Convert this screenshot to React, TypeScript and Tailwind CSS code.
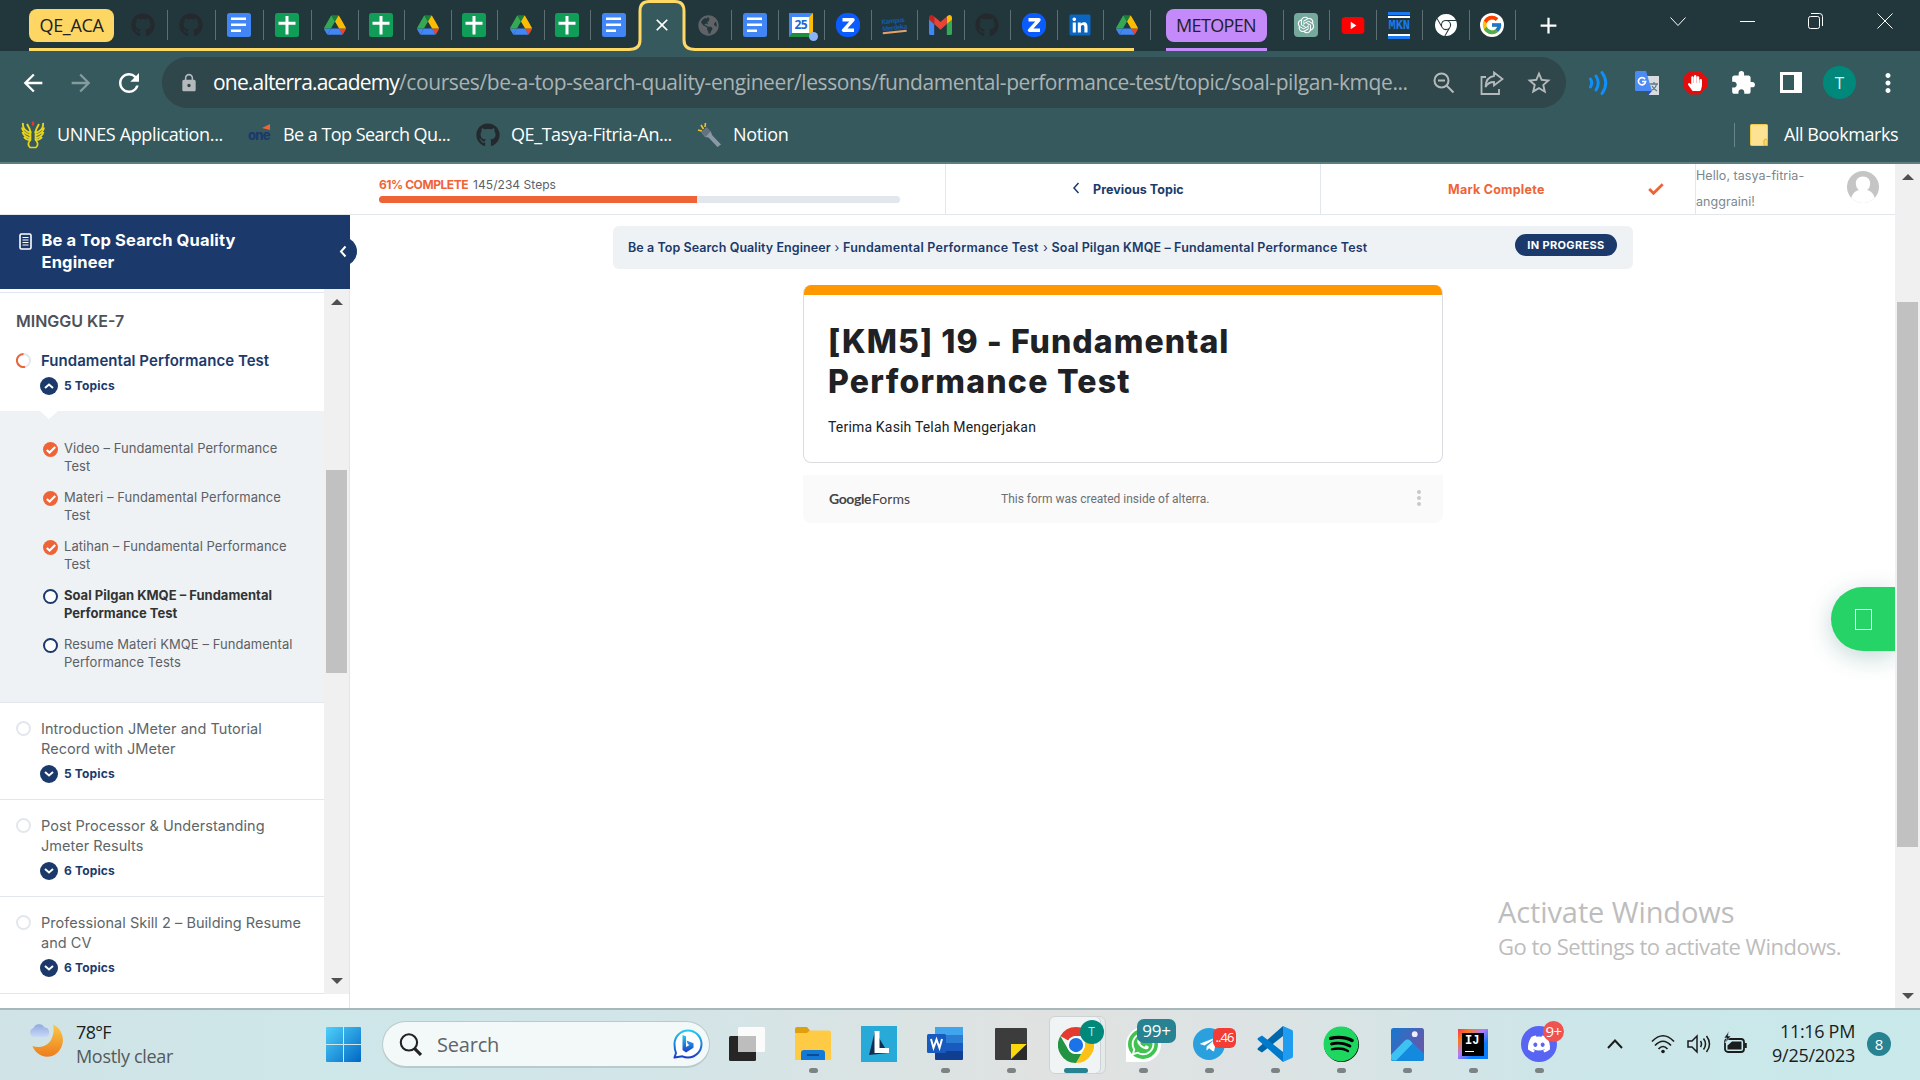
import React from 'react';
import type { ReactNode } from 'react';
import { FaGithub, FaSpotify, FaWhatsapp, FaTelegramPlane, FaDiscord, FaLinkedin, FaGlobeAmericas, FaHandPaper } from 'react-icons/fa';
import { FcGoogle } from 'react-icons/fc';
import { SiGooglechrome } from 'react-icons/si';
import { RiOpenaiFill } from 'react-icons/ri';
import { MdArrowBack, MdArrowForward, MdRefresh, MdLock, MdStarBorder, MdExtension, MdMoreVert, MdAdd, MdClose } from 'react-icons/md';

/* ---------- favicons ---------- */

const DocsIcon = () => (
  <svg viewBox="0 0 24 24" className="size-6">
    <rect width="24" height="24" rx="2.5" fill="#4285f4" />
    <path d="M4 5.8h15M4 11.8h15M4 17.8h10" stroke="#fff" strokeWidth="2.6" />
  </svg>
);

const SheetsIcon = () => (
  <svg viewBox="0 0 24 24" className="size-6">
    <rect width="24" height="24" rx="2.5" fill="#0f9d58" />
    <path d="M3.5 10.2h17M12 3v18.5" stroke="#fff" strokeWidth="3" />
  </svg>
);

const DriveIcon = () => (
  <svg viewBox="0 0 87.3 78" className="h-5 w-[22px]">
    <path d="m6.6 66.85 3.85 6.65c.8 1.4 1.95 2.5 3.3 3.3l13.75-23.8h-27.5c0 1.55.4 3.1 1.2 4.5z" fill="#4285f4" />
    <path d="m43.65 25-13.75-23.8c-1.35.8-2.5 1.9-3.3 3.3l-25.4 44a9.06 9.06 0 0 0-1.2 4.5h27.5z" fill="#34a853" />
    <path d="m73.55 76.8c1.35-.8 2.5-1.9 3.3-3.3l1.6-2.75 7.65-13.25c.8-1.4 1.2-2.95 1.2-4.5h-27.502l5.852 11.5z" fill="#ea4335" />
    <path d="m43.65 25 13.75-23.8c-1.35-.8-2.9-1.2-4.5-1.2h-18.5c-1.6 0-3.15.45-4.5 1.2z" fill="#188038" />
    <path d="m59.8 53h-32.3l-13.75 23.8c1.35.8 2.9 1.2 4.5 1.2h50.8c1.6 0 3.15-.45 4.5-1.2z" fill="#4285f4" />
    <path d="m73.4 26.5-12.7-22c-.8-1.4-1.95-2.5-3.3-3.3l-13.75 23.8 16.15 28h27.45c0-1.55-.4-3.1-1.2-4.5z" fill="#fbbc04" />
  </svg>
);

const CalendarIcon = () => (
  <div className="relative size-6">
    <div className="flex size-6 items-center justify-center overflow-hidden border-y-4 border-r-[4px] border-l-[3px] border-t-[#4285f4] border-r-[#fbbc04] border-b-[#1e8e3e] border-l-[#4285f4] bg-white font-['Open_Sans',sans-serif] text-[12px] leading-none font-bold tracking-[-0.5px] text-[#1a67d2]">
      25
    </div>
    <span className="absolute -right-[5px] -bottom-1 size-[9px] rounded-full bg-[#8ab4f8]" />
  </div>
);

const ZoomIcon = () => (
  <svg viewBox="0 0 24 24" className="size-6">
    <rect width="24" height="24" rx="11" fill="#0b5cff" />
    <path d="M6.500 6.800H17L7.500 17.300H18" fill="none" stroke="#fff" strokeWidth="3.4" strokeLinejoin="round" />
  </svg>
);

const KampusIcon = () => (
  <div className="w-6 -rotate-6 border-b-2 border-[#e9a36a] font-['Open_Sans',sans-serif] text-[6.500px] leading-[7px] font-bold tracking-[-0.6px] text-[#1459a8]">
    Kampus Merdeka
  </div>
);

const GmailIcon = () => (
  <svg viewBox="0 0 24 18" className="h-[20px] w-[23px]" preserveAspectRatio="none">
    <path d="M0 3v13.400C0 17.300.7 18 1.600 18h3.800V8z" fill="#4285f4" />
    <path d="M24 3v13.400c0 .9-.7 1.600-1.600 1.600h-3.800V8z" fill="#34a853" />
    <path d="M18.600 1.400V8.200L24 4.100V2.500c0-2-2.300-3.200-4-2z" fill="#fbbc04" />
    <path d="M5.400 8.200V1.400L12 6.400l6.600-5v6.800L12 13.200z" fill="#ea4335" />
    <path d="M0 2.500v1.600l5.400 4.100V1.400L4 .5C2.300-.7 0 .5 0 2.500z" fill="#c5221f" />
  </svg>
);

const YoutubeIcon = () => (
  <svg viewBox="0 0 24 18" className="h-[17px] w-6">
    <rect width="24" height="18" rx="4" fill="#f00" />
    <path d="M9.600 5v8l6-4z" fill="#fff" />
  </svg>
);

const MknIcon = () => (
  <div className="flex h-[27px] w-[22px] flex-col items-center justify-between border-y-[3px] border-[#1a7af0]">
    <div className="mt-px w-full border-y-2 border-white py-[2px] text-center font-['Liberation_Mono',monospace] text-[12px] leading-[12px] font-bold text-[#1a7af0]">MKN</div>
  </div>
);

const Github = () => <FaGithub className="size-6 text-[#24292e]" />;

function Tab({ children, wide }: { children: ReactNode; wide?: boolean }) {
  return (
    <div className={`flex h-[30px] shrink-0 items-center justify-center border-r border-[#5d6f72] ${wide ? 'w-12 pr-px' : 'w-[46.5px]'}`}>
      {children}
    </div>
  );
}

function TabStrip() {
  return (
    <div className="relative flex h-[51px] items-center bg-[#22373b] pb-px pl-[29px]">
      <svg className="absolute top-0 left-0 h-[51px] w-[1140px]" viewBox="0 0 1140 51">
        <path d="M630 51C637 50 640 46 640 40V11Q640 1.500 649 1.500H675Q684 1.500 684 11V40C684 46 687 50 694 51z" fill="#36595d" />
        <path d="M29 49.500H629C637 49.500 640 46 640 40V11Q640 1.500 649 1.500H675Q684 1.500 684 11V40C684 46 687 49.500 695 49.500H1134" fill="none" stroke="#ffd966" strokeWidth="3" />
      </svg>
      <div className="mr-[6px] flex h-[33px] w-[85px] shrink-0 items-center justify-center rounded-lg bg-[#fdd663] text-[18px] tracking-[-0.35px] text-[#202124]">QE_ACA</div>
      <Tab wide><Github /></Tab>
      <Tab wide><Github /></Tab>
      <Tab wide><DocsIcon /></Tab>
      <Tab wide><SheetsIcon /></Tab>
      <Tab><DriveIcon /></Tab>
      <Tab><SheetsIcon /></Tab>
      <Tab><DriveIcon /></Tab>
      <Tab><SheetsIcon /></Tab>
      <Tab><DriveIcon /></Tab>
      <Tab><SheetsIcon /></Tab>
      <div className="flex w-[46.500px] shrink-0 items-center justify-center"><DocsIcon /></div>
      <div className="relative flex w-[48px] shrink-0 items-center justify-center text-white"><MdClose className="size-5" /></div>
      <Tab><FaGlobeAmericas className="size-[21px] text-[#5f6368]" /></Tab>
      <Tab><DocsIcon /></Tab>
      <Tab><CalendarIcon /></Tab>
      <Tab><ZoomIcon /></Tab>
      <Tab><KampusIcon /></Tab>
      <Tab><GmailIcon /></Tab>
      <Tab><Github /></Tab>
      <Tab><ZoomIcon /></Tab>
      <Tab><div className="flex size-[19px] items-center justify-center bg-white"><FaLinkedin className="size-6 shrink-0 text-[#0a66c2]" /></div></Tab>
      <Tab><DriveIcon /></Tab>
      <div className="relative mr-[16px] ml-[15px] flex h-[33px] w-[101px] shrink-0 items-center justify-center rounded-lg bg-[#c58af9] text-[18px] tracking-[-0.65px] text-[#202124]">
        METOPEN
        <span className="absolute top-[39px] left-0 h-[3px] w-full bg-[#c58af9]" />
      </div>
      <span className="h-[30px] w-px bg-[#5d6f72]" />
      <Tab><div className="flex size-6 items-center justify-center rounded-[4px] bg-[#75a99c]"><RiOpenaiFill className="size-5 text-white" /></div></Tab>
      <Tab><YoutubeIcon /></Tab>
      <Tab><MknIcon /></Tab>
      <Tab><SiGooglechrome className="size-[22px] text-white" /></Tab>
      <Tab><div className="flex size-6 items-center justify-center rounded-full bg-white"><FcGoogle className="size-[22px]" /></div></Tab>
      <MdAdd className="ml-[19px] size-[27px] shrink-0 text-white" />
      <div className="mb-[8px] ml-[108px] flex items-center text-white">
        <svg className="mr-[54px] h-[9px] w-4" viewBox="0 0 16 9"><path d="M.5.500 8 8.500 15.500.500" fill="none" stroke="currentColor" /></svg>
        <span className="mr-[53px] h-px w-[15px] bg-white" />
        <svg className="mr-[54px] h-4 w-[15px]" viewBox="0 0 15 16"><rect x=".5" y="3.500" width="11" height="12" rx="2" fill="none" stroke="currentColor" /><path d="M3 .500h8.500a3 3 0 0 1 3 3V13" fill="none" stroke="currentColor" /></svg>
        <svg className="h-4 w-4" viewBox="0 0 16 16"><path d="m.5.500 15 15m0-15-15 15" stroke="currentColor" /></svg>
      </div>
    </div>
  );
}

function TranslateIcon() {
  return (
    <svg viewBox="0 0 24 24" className="size-6">
      <path d="M10 5h14v19H14z" fill="#d9dcdf" />
      <path d="M15 13h8M19 11v2m2.500 0c-.5 3-3 5.500-5.500 6.500m1-4.500c1 2 3 4 5 5" stroke="#607988" strokeWidth="1.300" fill="none" />
      <path d="M0 1.500Q0 0 1.500 0H11l6 20H1.500Q0 20 0 18.500z" fill="#4c8bf5" />
      <path d="M12 20h5l-3.500 4z" fill="#2a4fc0" />
      <path d="M10 8.200A3.600 3.600 0 1 0 10.600 10.500H7" fill="none" stroke="#fff" strokeWidth="1.700" />
    </svg>
  );
}

function Toolbar() {
  return (
    <div className="flex h-[63px] items-center bg-[#36595d] pl-[19px] text-white">
      <MdArrowBack className="size-[28px]" />
      <MdArrowForward className="ml-[20px] size-[28px] text-[#869b9e]" />
      <MdRefresh className="ml-[19px] size-[30px]" />
      <div className="ml-[18px] flex h-[51px] w-[1404px] shrink-0 items-center rounded-full bg-[#2f464a] text-[#b4babc]">
        <MdLock className="ml-[17px] size-5" />
        <div className="ml-[14px] w-[1220px] whitespace-nowrap text-[21px] tracking-[-0.41px] text-[#a9b3b5]">
          <span className="tracking-[-0.81px] text-white">one.alterra.academy</span>
          /courses/be-a-top-search-quality-engineer/lessons/fundamental-performance-test/topic/soal-pilgan-kmqe...
        </div>
        <svg viewBox="0 0 22 22" className="size-[22px] shrink-0" fill="none" stroke="currentColor" strokeWidth="2"><circle cx="8.500" cy="8.500" r="7" /><path d="m13.500 13.500 7 7M5 8.500h7" /></svg>
        <svg viewBox="0 0 24 24" className="ml-[25px] size-6 shrink-0" fill="none" stroke="currentColor" strokeWidth="1.800"><path d="M6 6H1.500V23H19V18M14 1.500 22.500 8 14 14.500V11Q8 11 5.500 16 6 6 14 5z" /></svg>
        <MdStarBorder className="ml-[21px] size-[28px] shrink-0" />
      </div>
      <svg viewBox="0 0 20 26" className="ml-[22px] h-[26px] w-[21px] shrink-0" fill="none" stroke="#0f8ffa" strokeWidth="3" strokeLinecap="round"><path d="M2 9Q4.500 13 2 17M7.500 6Q12 13 7.500 20M13.500 2.500Q21 13 13.500 23.500" /></svg>
      <div className="ml-[26px]"><TranslateIcon /></div>
      <div className="ml-6 flex size-6 items-center justify-center bg-[#e40d0d] [clip-path:polygon(30%_0,70%_0,100%_30%,100%_70%,70%_100%,30%_100%,0_70%,0_30%)]"><FaHandPaper className="size-[16px]" /></div>
      <MdExtension className="ml-[23px] size-[26px]" />
      <div className="ml-[24px] h-[21px] w-[22px] border-[3px] border-r-[8px] border-white" />
      <div className="ml-[21px] flex size-[33px] items-center justify-center rounded-full bg-[#00897b] text-[17px] text-[#e6f3f2]">T</div>
      <MdMoreVert className="ml-[17px] size-[30px]" />
    </div>
  );
}

function BookmarksBar() {
  return (
    <div className="flex h-[48px] items-center bg-[#36595d] pb-[7px] text-[18px] text-white">
      <svg viewBox="0 0 24 28" className="ml-[21px] h-7 w-6 shrink-0" fill="none" stroke="#e8d41a">
        <path d="M2 2Q1 9 9.500 12M1 6.500Q1.500 12 9.500 14.500M1.500 11Q3 16 9.500 17M3 16Q5 19 9.500 19M22 2Q23 9 14.500 12M23 6.500Q22.500 12 14.500 14.500M22.500 11Q21 16 14.500 17M21 16Q19 19 14.500 19M6 3Q8.500 7 10 12M18 3Q15.500 7 14 12" strokeWidth="1.900" />
        <path d="M9.500 12v7Q5.500 23 9 26.500H15Q18.500 23 14.500 19V12" strokeWidth="1.700" />
        <path d="M12 .500v4" stroke="#e33" strokeWidth="2.200" />
      </svg>
      <span className="ml-3 w-[191px] whitespace-nowrap tracking-[-0.35px]">UNNES Application...</span>
      <div className="relative w-[24px] font-['Inter',sans-serif] text-[13px] leading-4 font-extrabold tracking-[-0.800px] text-[#1b3a6b]">
        one
        <svg viewBox="0 0 8 6" className="absolute top-[-3px] left-[14px] h-[6px] w-2"><path d="M0 4 8 0v6z" fill="#ef6437" /></svg>
      </div>
      <span className="ml-[11px] w-[193px] whitespace-nowrap tracking-[-0.54px]">Be a Top Search Qu...</span>
      <FaGithub className="size-6 shrink-0 text-[#24292e]" />
      <span className="ml-[11px] w-[186px] whitespace-nowrap tracking-[-0.42px]">QE_Tasya-Fitria-An...</span>
      <svg viewBox="0 0 24 24" className="size-6 shrink-0">
        <path d="M1 7 5 8M4 2l2.500 4M8.500 0 8 4" stroke="#f2c230" strokeWidth="1.600" />
        <path d="m4.500 9.500 5-5 4.500 4.500 1 3 9 9.500-3.500 2.500-9-9.500L8 14z" fill="#8b98a6" />
        <path d="m4.500 9.500 5-5 4 4-5 5.500z" fill="#66727f" />
      </svg>
      <span className="ml-3 tracking-[-0.3px]">Notion</span>
      <span className="ml-auto h-6 w-px bg-[#6b8487]" />
      <svg viewBox="0 0 18 22" className="ml-[15px] h-[22px] w-[18px]"><rect x=".5" y=".5" width="17" height="21" rx="1" fill="#fde293" stroke="#f0cb4c" /><path d="M14 21.500V16q2-2 3.500 0v5.500z" fill="#fdd663" stroke="#e0b53a" /></svg>
      <span className="mr-[22px] ml-[16px] tracking-[-0.46px]">All Bookmarks</span>
    </div>
  );
}

/* ---------- course page ---------- */

function CourseHeader() {
  return (
    <div className="flex h-[51px] shrink-0 border-b border-[#e2e7ed] bg-white">
      <div className="w-[946px] border-r border-[#e2e7ed] pt-[11px] pl-[379px]">
        <div className="h-[21px] text-[12px] leading-[20px]">
          <span className="font-bold tracking-[-0.45px] text-[#ef6437]">61% COMPLETE</span>
          <span className="ml-[5px] tracking-[0.05px] text-[#5c5f66]">145/234 Steps</span>
        </div>
        <div className="h-[7px] w-[521px] overflow-hidden rounded-full bg-[#e2e7ee]">
          <div className="h-full w-[318px] bg-[#ef6437]" />
        </div>
      </div>
      <div className="flex w-[375px] items-center border-r border-[#e2e7ed] pl-[126px] text-[12.500px] font-bold tracking-[0.05px] text-[#1b3a6b]">
        <svg viewBox="0 0 8 12" className="mr-[13px] mb-0.5 h-3 w-2" fill="none" stroke="currentColor" strokeWidth="1.500"><path d="M6.500 1 2 6l4.500 5" /></svg>
        <span className="pt-[3px]">Previous Topic</span>
      </div>
      <div className="flex w-[375px] items-center border-r border-[#e2e7ed] text-[12.500px] font-bold text-[#ef6437]">
        <span className="w-[327px] pt-[3px] pl-[127px] tracking-[0.25px]">Mark Complete</span>
        <svg viewBox="0 0 16 12" className="h-3 w-4" fill="none" stroke="currentColor" strokeWidth="2.800"><path d="m1.200 6 4.300 4.300L14.700 1.200" /></svg>
      </div>
      <div className="-mt-[1px] w-[151px] text-[12.500px] leading-[26px] tracking-[0.05px] text-[#7b8790]">
        Hello, tasya-fitria-
        <br />
        anggraini!
      </div>
      <svg viewBox="0 0 32 32" className="mt-[7px] size-8">
        <clipPath id="avatar"><circle cx="16" cy="16" r="16" /></clipPath>
        <g clipPath="url(#avatar)"><rect width="32" height="32" fill="#c5c5c5" /><path d="M16 5.500c4.500 0 7.200 3 7.200 7 0 3-1.500 5.300-3.200 6.500 5 1.300 8 5 8.700 13H3.300C4 24 7 20.300 12 19c-1.700-1.200-3.200-3.500-3.200-6.500 0-4 2.700-7 7.200-7z" fill="#fff" /></g>
      </svg>
    </div>
  );
}

function TopicsToggle({ count, open }: { count: number; open?: boolean }) {
  return (
    <div className="flex h-[18px] items-center text-[12px] font-bold tracking-[0.15px] text-[#1b3a6b]">
      <span className="mr-[6px] flex size-[18px] items-center justify-center rounded-full bg-[#1b3a6b]">
        <svg viewBox="0 0 10 6" className={open ? 'h-[6px] w-[10px]' : 'h-[6px] w-[10px] rotate-180'} fill="none" stroke="#fff" strokeWidth="2"><path d="M1 5 5 1.500 9 5" /></svg>
      </span>
      {count} Topics
    </div>
  );
}

const topics: { lines: [string, string]; state: 'done' | 'current' | 'todo' }[] = [
  { lines: ['Video – Fundamental Performance', 'Test'], state: 'done' },
  { lines: ['Materi – Fundamental Performance', 'Test'], state: 'done' },
  { lines: ['Latihan – Fundamental Performance', 'Test'], state: 'done' },
  { lines: ['Soal Pilgan KMQE – Fundamental', 'Performance Test'], state: 'current' },
  { lines: ['Resume Materi KMQE – Fundamental', 'Performance Tests'], state: 'todo' },
];

const lessons: { lines: [string, string]; count: number }[] = [
  { lines: ['Introduction JMeter and Tutorial', 'Record with JMeter'], count: 5 },
  { lines: ['Post Processor & Understanding', 'Jmeter Results'], count: 6 },
  { lines: ['Professional Skill 2 – Building Resume', 'and CV'], count: 6 },
];

function Arrow({ down }: { down?: boolean }) {
  return (
    <svg viewBox="0 0 12 6" className={down ? 'h-[6px] w-[12px] rotate-180' : 'h-[6px] w-[12px]'}><path d="M6 0l6 6H0z" fill="#505050" /></svg>
  );
}

function Sidebar() {
  return (
    <aside className="flex w-[350px] shrink-0 flex-col border-r border-[#e2e5e9]">
      <div className="relative -mr-px flex h-[74px] shrink-0 bg-[#1b3a6b] pt-[14px] pl-[19px] text-white">
        <svg viewBox="0 0 13 17" className="mt-[4px] mr-[9.500px] h-[17px] w-[13px]" fill="none" stroke="#fff"><rect x="1" y="1" width="11" height="15" rx="1.500" strokeWidth="1.600" /><path d="M3.500 4.500h6M3.500 7h6M3.500 9.500h6M3.500 12h6" /></svg>
        <p className="text-[16.500px] leading-[22px] font-bold tracking-[0.14px]">Be a Top Search Quality<br />Engineer</p>
        <span className="absolute top-[22px] left-[328px] flex size-[29px] items-center justify-center rounded-full bg-[#1b3a6b]">
          <svg viewBox="0 0 8 12" className="h-[13px] w-2" fill="none" stroke="#fff" strokeWidth="2"><path d="M6.500 1 2 6l4.500 5" /></svg>
        </span>
      </div>
      <div className="flex h-[705px]">
        <div className="w-[324px]">
          <div className="mt-[3px] h-[119px] border-t border-[#e0e5ef] pl-4">
            <h2 className="mt-[16px] text-[16px] leading-6 font-semibold text-[#4d5259]">MINGGU KE-7</h2>
            <div className="mt-[17px] flex h-[20px] items-center">
              <svg viewBox="0 0 15 15" className="mr-[10px] size-[15px]" fill="none" strokeWidth="2"><circle cx="7.500" cy="7.500" r="6.500" stroke="#e2e7ed" /><path d="M7.500 1a6.500 6.500 0 1 0 1.500 12.800" stroke="#ef6437" /></svg>
              <span className="pt-[2px] text-[15px] font-semibold tracking-[0.04px] text-[#1b3a6b]">Fundamental Performance Test</span>
            </div>
            <div className="mt-[7px] ml-6"><TopicsToggle count={5} open /></div>
          </div>
          <div className="h-[292px] border-b border-[#e2e7ed] bg-[#eef2f5]">
            <svg viewBox="0 0 18 8" className="ml-10 h-2 w-[18px]"><path d="M0 0h18L9 8z" fill="#fff" /></svg>
            <ul className="mt-[20px] flex flex-col gap-[13px] pl-[43px]">
              {topics.map((t) => (
                <li key={t.lines[0]} className="flex text-[13px] leading-[18px]">
                  {t.state === 'done' ? (
                    <span className="mt-[3px] mr-[6px] flex size-[15px] items-center justify-center rounded-full bg-[#ef6437]">
                      <svg viewBox="0 0 10 8" className="h-2 w-[10px]" fill="none" stroke="#fff" strokeWidth="2.200"><path d="M.8 4 3.600 6.500 9.200 1" /></svg>
                    </span>
                  ) : (
                    <span className="mt-[3px] mr-[6px] size-[15px] rounded-full border-2 border-[#1b3a6b] bg-white" />
                  )}
                  <span className={t.state === 'current' ? 'font-bold text-[#333]' : 'tracking-[0.05px] text-[#5d6064]'}>
                    {t.lines[0]}<br />{t.lines[1]}
                  </span>
                </li>
              ))}
            </ul>
          </div>
          {lessons.map((l) => (
            <div key={l.lines[0]} className="h-[97px] border-b border-[#e2e7ed] pt-4 pl-4">
              <div className="flex text-[14.500px] leading-5 text-[#5d6669]">
                <span className="mt-[2px] mr-[10px] size-[15px] rounded-full border-2 border-[#e2e7ed]" />
                <span className="tracking-[0.04px]">{l.lines[0]}<br />{l.lines[1]}</span>
              </div>
              <div className="mt-[6px] ml-6"><TopicsToggle count={l.count} /></div>
            </div>
          ))}
        </div>
        <div className="flex w-[25px] flex-col items-center bg-[#f0f0f0] pt-[10px] pb-[10px]">
          <Arrow />
          <div className="mt-[165px] h-[203px] w-[21px] bg-[#c1c1c1]" />
          <div className="mt-auto flex"><Arrow down /></div>
        </div>
      </div>
    </aside>
  );
}

function FormCard() {
  return (
    <div className="mt-4 ml-[453px] w-[640px]">
      <div className="h-[178px] overflow-hidden rounded-lg border border-t-0 border-[#dadce0] bg-white">
        <div className="-mx-px h-[10px] bg-[#ff9800]" />
        <h1 className="mt-[27px] pl-6 text-[32px] leading-[40px] font-extrabold text-[#202124]">
          <span className="tracking-[1.05px]">[KM5] 19 - Fundamental</span>
          <br />
          <span className="tracking-[1.25px]">Performance Test</span>
        </h1>
        <p className="mt-[15px] pl-6 font-['Roboto',sans-serif] text-[14px] leading-5 tracking-[0.18px] text-[#202124]">Terima Kasih Telah Mengerjakan</p>
      </div>
      <div className="mt-3 flex h-12 items-center rounded-b-lg bg-[#fafafa] pb-[2px] pl-[26px] font-['Roboto',sans-serif] text-[12px] text-[#6c6f73]">
        <span className="w-[172px] font-['Lato',sans-serif] text-[14px] text-[#444]"><b className="font-bold tracking-[-0.4px]">Google</b><span className="ml-px">Forms</span></span>
        <span className="pt-px">This form was created inside of alterra.</span>
        <div className="mr-[22px] ml-auto flex flex-col gap-[2px]">
          <span className="size-1 rounded-full bg-[#c8c8c8]" /><span className="size-1 rounded-full bg-[#c8c8c8]" /><span className="size-1 rounded-full bg-[#c8c8c8]" />
        </div>
      </div>
    </div>
  );
}

function Main() {
  return (
    <main className="flex flex-1 flex-col">
      <div className="mt-[11px] ml-[263px] flex h-[43px] w-[1020px] justify-between rounded-md bg-[#eef2f5] pr-4 pl-[15px]">
        <nav className="flex items-center pt-[2px] text-[12.500px] font-semibold text-[#1b3a6b]">
          <span className="w-[206.500px] tracking-[0.07px]">Be a Top Search Quality Engineer</span>
          <span className="w-[8.500px] font-normal">›</span>
          <span className="w-[200px] tracking-[0.23px]">Fundamental Performance Test</span>
          <span className="w-[8.500px] font-normal">›</span>
          <span className="tracking-[0.14px]">Soal Pilgan KMQE – Fundamental Performance Test</span>
        </nav>
        <span className="mt-2 flex h-[22px] w-[102px] items-center justify-center rounded-full bg-[#1b3a6b] text-[11px] font-bold tracking-[0.35px] text-white">IN PROGRESS</span>
      </div>
      <FormCard />
      <div className="mt-16 flex h-16 w-16 items-center self-end rounded-l-full bg-[#25d366] pl-6 shadow-[0_6px_24px_rgba(7,94,84,0.240)]">
        <span className="h-[21px] w-[17px] border border-white" />
      </div>
      <div className="mt-[243px] ml-[1148px] font-['Open_Sans',sans-serif] text-[#bdbdbd]">
        <p className="text-[29px] leading-9 tracking-[-0.1px]">Activate Windows</p>
        <p className="-mt-[2px] text-[22px] leading-9 tracking-[-0.5px]">Go to Settings to activate Windows.</p>
      </div>
    </main>
  );
}

function CoursePage() {
  return (
    <div className="flex h-[844px] bg-white font-['Inter',sans-serif]">
      <div className="flex w-[1895px] flex-col">
        <CourseHeader />
        <div className="flex flex-1">
          <Sidebar />
          <Main />
        </div>
      </div>
      <div className="flex w-[25px] flex-col items-center bg-[#f0f0f0] pt-[10px] pb-[9px]">
        <Arrow />
        <div className="mt-[122px] h-[545px] w-[21px] bg-[#c1c1c1]" />
        <div className="mt-auto flex"><Arrow down /></div>
      </div>
    </div>
  );
}

/* ---------- taskbar ---------- */

function WeatherIcon() {
  return (
    <svg viewBox="0 0 36 36" className="size-9">
      <defs>
        <linearGradient id="moon" x1="0" y1="0" x2="0" y2="1"><stop offset="0" stopColor="#f9c846" /><stop offset="1" stopColor="#ee7d1c" /></linearGradient>
        <linearGradient id="cloud" x1="0" y1="0" x2="0" y2="1"><stop offset="0" stopColor="#8fa8e0" /><stop offset="1" stopColor="#c9d9f5" /></linearGradient>
      </defs>
      <path d="M25 1.500C37 7 38 23 28.500 30.500 20 37 8 33 4.500 23 11 25.500 20 23.500 23.500 16 26 10.500 26 6 25 1.500z" fill="url(#moon)" />
      <path d="M5.500 14a4.700 4.700 0 0 1 0-9A6 6 0 0 1 16.500 4.500 4.900 4.900 0 0 1 18 14z" fill="url(#cloud)" />
    </svg>
  );
}

function BingIcon() {
  return (
    <svg viewBox="0 0 30 30" className="size-[30px]">
      <defs><linearGradient id="bing" x1="0" y1="0" x2="0" y2="1"><stop offset="0" stopColor="#25c9f0" /><stop offset="1" stopColor="#1a3fc4" /></linearGradient></defs>
      <path d="M1.500 28.500 3 24Q1.500 20 1.500 15A13.500 13.500 0 1 1 15 28.500Q12 28.500 9.500 27.300L1.500 28.500z" fill="#fff" stroke="url(#bing)" strokeWidth="2" strokeLinejoin="round" />
      <path d="M9.500 6 13 7.300V18l3.500-2-1.700-1-1.300-3.500 7 2.700v4.500L13 23.500l-3.500-2.500z" fill="url(#bing)" />
    </svg>
  );
}

const ExplorerIcon = () => (
  <svg viewBox="0 0 36 34" className="h-[34px] w-9"><path d="M0 2q0-2 2-2h10l3 3.500-3 3H0z" fill="#dfa00b" /><path d="M0 6h12l3-2.500h19q2 0 2 2V33H0z" fill="#ffcb45" /><path d="M6 33v-7q0-3 3-3h18q3 0 3 3v7z" fill="#127ad4" /><path d="M12 28h12" stroke="#0a4b95" strokeWidth="2" /></svg>
);
const TaskViewIcon = () => (
  <svg viewBox="0 0 36 36" className="size-9"><rect y="10" width="27" height="25" rx="1.500" fill="#262626" /><rect x="9" y="1" width="27" height="25" rx="1.500" fill="#fbfbfb" /><path d="M9 10h18v16H9z" fill="#bdbdbd" /></svg>
);
const LIcon = () => (
  <svg viewBox="0 0 36 36" className="size-9"><path d="M0 0h36v36H0z" fill="#27aad8" /><path d="m14 5-6 24 19-2z" fill="#0e2e56" /><path d="M13.500 5h5v17H28v5H13.500z" fill="#fff" /></svg>
);
const WordIcon = () => (
  <svg viewBox="0 0 36 34" className="h-[34px] w-9"><path d="M8 0h28v9H8z" fill="#41a5ee" /><path d="M8 8h28v9H8z" fill="#2b7cd3" /><path d="M8 16h28v9H8z" fill="#185abd" /><path d="M8 24h28v8q0 1-1 1H9q-1 0-1-1z" fill="#103f91" /><rect y="7" width="19" height="19" rx="1.500" fill="#185abd" /><path d="m4 12 2.500 9L9.500 12.500 12.500 21 15 12" fill="none" stroke="#fff" strokeWidth="2" /></svg>
);
const StickyIcon = () => (
  <svg viewBox="0 0 32 32" className="size-8"><rect width="32" height="32" rx="1" fill="#3c3c3c" /><path d="M16 16h16L16 31z" fill="#fbd80b" /><path d="M32 16v16H16z" fill="#2b2b2b" /></svg>
);
const ChromeIcon = () => (
  <svg viewBox="0 0 48 48" className="size-[36px]">
    <path d="M24 0A24 24 0 0 1 44.800 12H24A12 12 0 0 0 13.600 18L3.200 12A24 24 0 0 1 24 0z" fill="#e33b2e" />
    <path d="M44.800 12A24 24 0 0 1 24 48L34.400 30A12 12 0 0 0 34.400 18L31 12z" fill="#fbc116" />
    <path d="M3.200 12 13.600 30A12 12 0 0 0 24 36h6.900L24 48A24 24 0 0 1 3.200 12z" fill="#229342" />
    <circle cx="24" cy="24" r="12" fill="#fff" /><circle cx="24" cy="24" r="9.500" fill="#1a73e8" />
  </svg>
);
const VsCodeIcon = () => (
  <svg viewBox="0 0 36 36" className="size-9"><path d="M26 0v10L5 26.500 1 24q-1-1 0-2z" fill="#0065a9" /><path d="M26 36V26L5 9.500 1 12q-1 1 0 2z" fill="#007acc" /><path d="m26 0 9 4q1 .5 1 2v24q0 1.500-1 2l-9 4z" fill="#1f9cf0" /></svg>
);
const PhotosIcon = () => (
  <svg viewBox="0 0 32 32" className="size-[33px]"><defs><linearGradient id="photo" x1="0" y1="0" x2="1" y2=".6"><stop offset="0" stopColor="#1478cf" /><stop offset="1" stopColor="#6a56a8" /></linearGradient></defs><rect width="32" height="32" rx="2.500" fill="url(#photo)" /><path d="M0 26 13 12.500q3-2.500 6 0L32 25v5q0 2-2 2H2q-2 0-2-2z" fill="#148adf" /><path d="M0 26 13 12.500q3-2.500 6 0L21 15 5 31.500H2q-2 0-2-2z" fill="#3cc3f2" /><circle cx="23" cy="6" r="2.800" fill="#eef" /></svg>
);
const IntellijIcon = () => (
  <div className="flex size-[30px] items-center justify-center bg-[linear-gradient(135deg,#fe315d_0%,#f97a12_20%,#b07bfe_45%,#087cfa_70%,#087cfa_100%)]">
    <div className="flex h-[23px] w-[22px] flex-col bg-black pt-[3px] pl-[3px] font-['Liberation_Mono',monospace] text-[12px] leading-[10px] font-bold text-white">IJ<span className="mt-[5px] h-[1.500px] w-[9px] bg-white" /></div>
  </div>
);

function TaskItem({ children, running, badge }: { children: ReactNode; running?: boolean; badge?: ReactNode }) {
  return (
    <div className="relative flex w-[66px] shrink-0 flex-col items-center">
      <div className="mt-[16px] flex h-9 items-center justify-center">{children}</div>
      {running && <span className="mt-[6px] h-[5px] w-[9px] rounded-full bg-[#7c8385]" />}
      {badge}
    </div>
  );
}

function Taskbar() {
  return (
    <div className="flex h-[72px] border-t-2 border-[#a8b7b9] bg-[linear-gradient(90deg,#d0e3e6_0%,#cee7e9_17%,#d2e5e8_33%,#e0e2e1_55%,#dbe3e4_68%,#cce6e9_82%,#c9e9ea_100%)] font-['Open_Sans',sans-serif]">
      <div className="flex w-[326px] pt-[13px] pl-[28px]">
        <WeatherIcon />
        <div className="-mt-[3px] ml-3 text-[18px] leading-6">
          <p className="tracking-[-0.65px] text-[#1c1c1c]">78°F</p>
          <p className="tracking-[-0.32px] text-[#54595b]">Mostly clear</p>
        </div>
      </div>
      <svg viewBox="0 0 35 35" className="mt-[17px] size-[35px]"><defs><linearGradient id="win" x1="0" y1="0" x2="1" y2="1"><stop offset="0" stopColor="#4fd0fb" /><stop offset="1" stopColor="#0067c5" /></linearGradient></defs><path d="M0 1q0-1 1-1h16v17H0zM18 0h16q1 0 1 1v16H18zM0 18h17v17H1q-1 0-1-1zM18 18h17v16q0 1-1 1H18z" fill="url(#win)" /></svg>
      <div className="mt-[11px] ml-[21px] flex h-[47px] w-[328px] shrink-0 items-center rounded-full border border-b-2 border-[#b9cacb] bg-[#f3f8f9] pl-[16px]">
        <svg viewBox="0 0 22 22" className="size-[23px]" fill="none" stroke="#222"><circle cx="9.500" cy="9" r="7.800" strokeWidth="2" /><path d="m15 15 6 6" strokeWidth="3" /></svg>
        <span className="ml-[15px] pt-px text-[20px] tracking-[-0.2px] text-[#5f6567]">Search</span>
        <span className="mr-1.5 ml-auto"><BingIcon /></span>
      </div>
      <div className="ml-[4px] flex">
        <TaskItem><TaskViewIcon /></TaskItem>
        <TaskItem running><ExplorerIcon /></TaskItem>
        <TaskItem><LIcon /></TaskItem>
        <TaskItem running><WordIcon /></TaskItem>
        <TaskItem running><StickyIcon /></TaskItem>
        <div className="flex w-[66px] shrink-0 justify-center pt-[6px]">
          <div className="relative flex h-[58px] w-[57px] flex-col items-center rounded-md border border-[#cdd3d4] bg-[#f1f4f4] pt-[10px] pr-0.5 shadow-[inset_-4px_0_0_#e4e9ea,inset_-5px_0_0_#cdd3d4]">
            <ChromeIcon />
            <span className="mt-[5px] h-[5px] w-6 shrink-0 rounded-full bg-[#278292]" />
            <span className="absolute top-[3px] left-[30px] flex size-6 items-center justify-center rounded-full bg-[#00897b] text-[12px] text-[#bfe5e0]">T</span>
          </div>
        </div>
        <TaskItem running badge={<span className="absolute top-[9px] left-[27px] flex h-6 w-[39px] items-center justify-center rounded-[7px] bg-[#278292] text-[17px] tracking-[-0.3px] text-white">99+</span>}>
          <div className="flex size-[35px] items-center justify-center rounded-[18px] rounded-bl-none bg-white"><div className="flex size-[30px] items-center justify-center rounded-full bg-[#40c351]"><FaWhatsapp className="size-[26px] text-white" /></div></div>
        </TaskItem>
        <TaskItem running badge={<span className="absolute top-[18px] left-[37px] flex h-5 w-[23px] items-center justify-center rounded-[6px] bg-[#f23c34] text-[13px] tracking-[-0.9px] text-white">..46</span>}>
          <div className="flex size-8 items-center justify-center rounded-full bg-[#2aa1de]"><FaTelegramPlane className="mr-0.5 size-[19px] text-white" /></div>
        </TaskItem>
        <TaskItem running><VsCodeIcon /></TaskItem>
        <TaskItem running><div className="flex size-[35px] items-center justify-center rounded-full bg-black"><FaSpotify className="size-9 shrink-0 text-[#1ed760]" /></div></TaskItem>
        <TaskItem running><PhotosIcon /></TaskItem>
        <TaskItem running><IntellijIcon /></TaskItem>
        <TaskItem running badge={<span className="absolute top-[11px] left-[37px] flex size-[21px] items-center justify-center rounded-full bg-[#ef5350] text-[15px] tracking-[-0.5px] text-white">9+</span>}>
          <div className="flex size-9 items-center justify-center rounded-full bg-[#5865f2]"><FaDiscord className="size-6 text-white" /></div>
        </TaskItem>
      </div>
      <div className="ml-[35px] flex h-[68px] items-center text-[#1c1c1c]">
        <svg viewBox="0 0 16 10" className="h-[10px] w-4" fill="none" stroke="currentColor" strokeWidth="2"><path d="m1 9 7-7.500L15 9" /></svg>
        <svg viewBox="0 0 24 20" className="ml-7 h-5 w-6" fill="none" stroke="currentColor" strokeWidth="1.700"><path d="M1 7.500Q12-4 23 7.500M4 11.500Q12 3 20 11.500M7.500 15Q12 10 16.500 15" /><circle cx="12" cy="17.500" r="1.800" fill="currentColor" stroke="none" /></svg>
        <svg viewBox="0 0 24 20" className="ml-3 h-5 w-6" fill="none" stroke="currentColor" strokeWidth="1.500"><path d="M1 7h4l5-5v16l-5-5H1zM13.500 7q2 3 0 6M16.500 4.500q4 5.500 0 11M19.500 2q6 8 0 16" /></svg>
        <svg viewBox="0 0 24 24" className="mb-[3px] ml-3 size-6" fill="none" stroke="currentColor" strokeWidth="1.800"><rect x="2" y="8" width="19" height="13" rx="3" /><path d="M22.500 12v5" strokeWidth="2.500" /><path d="M9 10.500h9.500v8H4.500v-4z" fill="currentColor" stroke="none" /><path d="M6 0 1 7h3L2 12l6-7H5z" fill="currentColor" stroke="#cce6e9" strokeWidth=".6" /></svg>
      </div>
      <div className="ml-auto pt-[9px] text-right text-[18px] leading-6 text-[#1c1c1c]">
        <p className="tracking-[-0.32px]">11:16 PM</p>
        <p className="tracking-[-0.25px]">9/25/2023</p>
      </div>
      <span className="mt-[22px] mr-[29px] ml-3 flex size-6 items-center justify-center rounded-full bg-[#278292] text-[15px] text-white">8</span>
    </div>
  );
}

export default function App() {
  return (
    <div className="flex h-[1080px] w-[1920px] flex-col overflow-hidden font-['Open_Sans',sans-serif]">
      <TabStrip />
      <Toolbar />
      <div className="border-b-2 border-[#5d7f80]"><BookmarksBar /></div>
      <CoursePage />
      <Taskbar />
    </div>
  );
}
